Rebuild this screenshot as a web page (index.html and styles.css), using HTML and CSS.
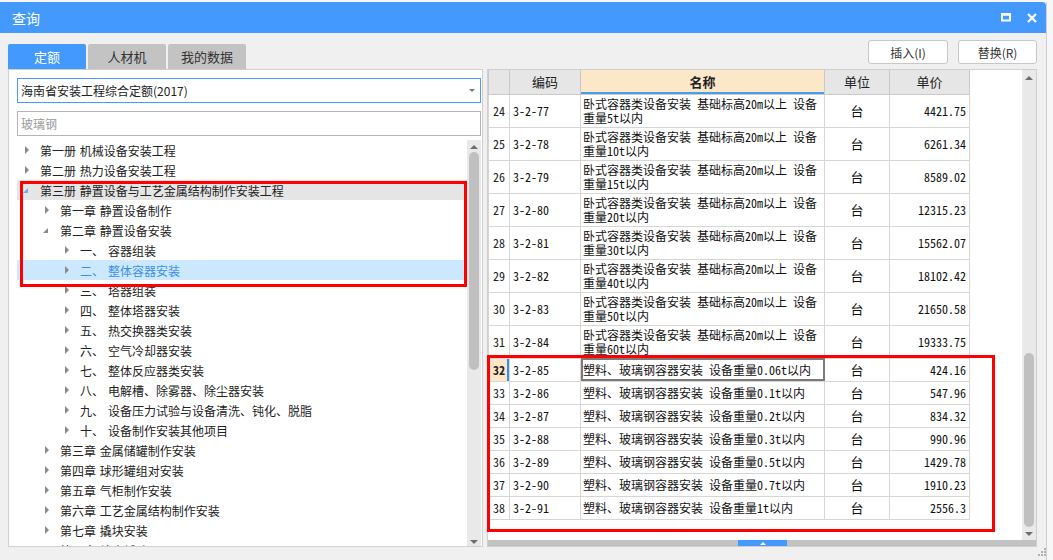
FILE: index.html
```html
<!DOCTYPE html>
<html lang="zh-CN">
<head>
<meta charset="utf-8">
<title>查询</title>
<link rel="stylesheet" href="styles.css">
</head>
<body>
<div class="dialog">
  <div class="titlebar">
    <span class="title">查询</span>
    <div class="win-btns">
      <svg width="10" height="9" viewBox="0 0 10 9"><rect x="1" y="1.5" width="8" height="6" fill="none" stroke="#fff" stroke-width="2"/><rect x="0" y="0" width="10" height="2.5" fill="#fff"/></svg>
      <svg width="10" height="10" viewBox="0 0 10 10"><path d="M1 1L9 9M9 1L1 9" stroke="#fff" stroke-width="2.2"/></svg>
    </div>
  </div>
  <div class="toolbar">
    <div class="tabs">
      <div class="tab active">定额</div>
      <div class="tab">人材机</div>
      <div class="tab">我的数据</div>
    </div>
    <div class="actions">
      <button class="btn btn-insert">插入(I)</button>
      <button class="btn btn-replace">替换(R)</button>
    </div>
  </div>
  <div class="main">
    <div class="left">
      <div class="select">海南省安装工程综合定额(2017)<span class="caret"></span></div>
      <div class="search">玻璃钢</div>
      <div class="tree-wrap">
        <ul class="tree">
          <li class="row l0"><span class="arr"><i class="tri"></i></span><span>第一册 机械设备安装工程</span></li>
          <li class="row l0"><span class="arr"><i class="tri"></i></span><span>第二册 热力设备安装工程</span></li>
          <li class="row l0 hover"><span class="arr"><i class="tri-open blue"></i></span><span>第三册 静置设备与工艺金属结构制作安装工程</span></li>
          <li class="row l1"><span class="arr"><i class="tri"></i></span><span>第一章 静置设备制作</span></li>
          <li class="row l1"><span class="arr"><i class="tri-open"></i></span><span>第二章 静置设备安装</span></li>
          <li class="row l2"><span class="arr"><i class="tri"></i></span><span class="num">一、</span><span>容器组装</span></li>
          <li class="row l2 selected"><span class="arr"><i class="tri"></i></span><span class="num">二、</span><span>整体容器安装</span></li>
          <li class="row l2"><span class="arr"><i class="tri"></i></span><span class="num">三、</span><span>塔器组装</span></li>
          <li class="row l2"><span class="arr"><i class="tri"></i></span><span class="num">四、</span><span>整体塔器安装</span></li>
          <li class="row l2"><span class="arr"><i class="tri"></i></span><span class="num">五、</span><span>热交换器类安装</span></li>
          <li class="row l2"><span class="arr"><i class="tri"></i></span><span class="num">六、</span><span>空气冷却器安装</span></li>
          <li class="row l2"><span class="arr"><i class="tri"></i></span><span class="num">七、</span><span>整体反应器类安装</span></li>
          <li class="row l2"><span class="arr"><i class="tri"></i></span><span class="num">八、</span><span>电解槽、除雾器、除尘器安装</span></li>
          <li class="row l2"><span class="arr"><i class="tri"></i></span><span class="num">九、</span><span>设备压力试验与设备清洗、钝化、脱脂</span></li>
          <li class="row l2"><span class="arr"><i class="tri"></i></span><span class="num">十、</span><span>设备制作安装其他项目</span></li>
          <li class="row l1"><span class="arr"><i class="tri"></i></span><span>第三章 金属储罐制作安装</span></li>
          <li class="row l1"><span class="arr"><i class="tri"></i></span><span>第四章 球形罐组对安装</span></li>
          <li class="row l1"><span class="arr"><i class="tri"></i></span><span>第五章 气柜制作安装</span></li>
          <li class="row l1"><span class="arr"><i class="tri"></i></span><span>第六章 工艺金属结构制作安装</span></li>
          <li class="row l1"><span class="arr"><i class="tri"></i></span><span>第七章 撬块安装</span></li>
          <li class="row l1"><span class="arr"><i class="tri"></i></span><span>第八章 综合辅助项目</span></li>
        </ul>
        <div class="vscroll left-scroll">
          <i class="up"></i>
          <div class="thumb"></div>
          <i class="down"></i>
        </div>
      </div>
    </div>
    <div class="right">
      <div class="grid-wrap">
        <div class="grid">
          <table>
            <colgroup><col class="c-no"><col class="c-code"><col class="c-name"><col class="c-unit"><col class="c-price"></colgroup>
            <thead>
              <tr><th></th><th>编码</th><th class="cur-col">名称</th><th>单位</th><th>单价</th></tr>
            </thead>
            <tbody>
              <tr class="two"><td class="no">24</td><td class="code">3-2-77</td><td class="name">卧式容器类设备安装 基础标高20m以上 设备重量5t以内</td><td class="unit">台</td><td class="price">4421.75</td></tr>
              <tr class="two"><td class="no">25</td><td class="code">3-2-78</td><td class="name">卧式容器类设备安装 基础标高20m以上 设备重量10t以内</td><td class="unit">台</td><td class="price">6261.34</td></tr>
              <tr class="two"><td class="no">26</td><td class="code">3-2-79</td><td class="name">卧式容器类设备安装 基础标高20m以上 设备重量15t以内</td><td class="unit">台</td><td class="price">8589.02</td></tr>
              <tr class="two"><td class="no">27</td><td class="code">3-2-80</td><td class="name">卧式容器类设备安装 基础标高20m以上 设备重量20t以内</td><td class="unit">台</td><td class="price">12315.23</td></tr>
              <tr class="two"><td class="no">28</td><td class="code">3-2-81</td><td class="name">卧式容器类设备安装 基础标高20m以上 设备重量30t以内</td><td class="unit">台</td><td class="price">15562.07</td></tr>
              <tr class="two"><td class="no">29</td><td class="code">3-2-82</td><td class="name">卧式容器类设备安装 基础标高20m以上 设备重量40t以内</td><td class="unit">台</td><td class="price">18102.42</td></tr>
              <tr class="two"><td class="no">30</td><td class="code">3-2-83</td><td class="name">卧式容器类设备安装 基础标高20m以上 设备重量50t以内</td><td class="unit">台</td><td class="price">21650.58</td></tr>
              <tr class="two"><td class="no">31</td><td class="code">3-2-84</td><td class="name">卧式容器类设备安装 基础标高20m以上 设备重量60t以内</td><td class="unit">台</td><td class="price">19333.75</td></tr>
              <tr class="one"><td class="no cur-row">32</td><td class="code">3-2-85</td><td class="name focus">塑料、玻璃钢容器安装 设备重量0.06t以内</td><td class="unit">台</td><td class="price">424.16</td></tr>
              <tr class="one"><td class="no">33</td><td class="code">3-2-86</td><td class="name">塑料、玻璃钢容器安装 设备重量0.1t以内</td><td class="unit">台</td><td class="price">547.96</td></tr>
              <tr class="one"><td class="no">34</td><td class="code">3-2-87</td><td class="name">塑料、玻璃钢容器安装 设备重量0.2t以内</td><td class="unit">台</td><td class="price">834.32</td></tr>
              <tr class="one"><td class="no">35</td><td class="code">3-2-88</td><td class="name">塑料、玻璃钢容器安装 设备重量0.3t以内</td><td class="unit">台</td><td class="price">990.96</td></tr>
              <tr class="one"><td class="no">36</td><td class="code">3-2-89</td><td class="name">塑料、玻璃钢容器安装 设备重量0.5t以内</td><td class="unit">台</td><td class="price">1429.78</td></tr>
              <tr class="one"><td class="no">37</td><td class="code">3-2-90</td><td class="name">塑料、玻璃钢容器安装 设备重量0.7t以内</td><td class="unit">台</td><td class="price">1910.23</td></tr>
              <tr class="one"><td class="no">38</td><td class="code">3-2-91</td><td class="name">塑料、玻璃钢容器安装 设备重量1t以内</td><td class="unit">台</td><td class="price">2556.3</td></tr>
            </tbody>
          </table>
        </div>
        <div class="vscroll right-scroll">
          <i class="up"></i>
          <div class="thumb"></div>
          <i class="down"></i>
        </div>
      </div>
      <div class="hscroll"><span class="hthumb"><i></i></span></div>
    </div>
  </div>
  <svg class="grip" width="8" height="8" viewBox="0 0 8 8"><g fill="#b0b0b0"><rect x="6" y="0" width="2" height="2"/><rect x="3" y="3" width="2" height="2"/><rect x="6" y="3" width="2" height="2"/><rect x="0" y="6" width="2" height="2"/><rect x="3" y="6" width="2" height="2"/><rect x="6" y="6" width="2" height="2"/></g></svg>
  <div class="mark mark1"></div>
  <div class="mark mark2"></div>
</div>
</body>
</html>
```

FILE: styles.css
```css
* { box-sizing: border-box; margin: 0; padding: 0; }
html, body { width: 1053px; height: 560px; overflow: hidden; }
body {
  background: #f7f7f7;
  font-family: "Noto Sans CJK SC", "Microsoft YaHei", sans-serif;
  font-size: 12px;
  color: #222;
}
.dialog {
  position: relative;
  margin-top: 2px;
  width: 1047px;
  height: 558px;
  background: #f0f0f0;
  border-right: 1px solid #cfcfcf;
}
.titlebar {
  height: 31px;
  background: #4499ff;
  color: #fff;
  display: flex;
  align-items: center;
  justify-content: space-between;
  padding: 0 9px 0 12px;
  border-top-right-radius: 4px;
}
.title { font-size: 14px; }
.win-btns { display: flex; align-items: center; gap: 16px; }

.toolbar {
  height: 36px;
  display: flex;
  justify-content: space-between;
  padding: 0 9px 0 8px;
}
.tabs { display: flex; gap: 2px; align-self: flex-end; }
.tab {
  width: 78px;
  height: 25px;
  background: #c3c3c3;
  color: #333;
  font-size: 13px;
  display: flex;
  align-items: center;
  justify-content: center;
  border-radius: 2px 2px 0 0;
}
.tab.active { background: #4499ff; color: #fff; }
.actions { display: flex; gap: 10px; margin-top: 7px; }
.btn {
  height: 24px;
  background: #fff;
  border: 1px solid #c8c8c8;
  border-radius: 3px;
  font-family: inherit;
  font-size: 12px;
  color: #333;
}
.btn-insert { width: 80px; }
.btn-replace { width: 79px; }

.main {
  height: 478px;
  display: flex;
  gap: 4px;
  padding: 0 9px 0 8px;
}
.left {
  width: 475px;
  background: #fff;
  border: 1px solid #cfcfcf;
  padding: 8px 1px 0 8px;
  display: flex;
  flex-direction: column;
}
.select {
  position: relative;
  height: 25px;
  border: 1px solid #4a9cf5;
  padding-left: 3px;
  display: flex;
  align-items: center;
  font-size: 12px;
  color: #222;
}
.caret {
  position: absolute;
  right: 5px;
  top: 10px;
  border-left: 3px solid transparent;
  border-right: 3px solid transparent;
  border-top: 3px solid #777;
}
.search {
  margin-top: 8px;
  height: 25px;
  border: 1px solid #b4b4b4;
  padding-left: 3px;
  display: flex;
  align-items: center;
  color: #999;
}
.tree-wrap {
  margin-top: 4px;
  flex: 1;
  display: flex;
  overflow: hidden;
}
.tree {
  list-style: none;
  flex: 1;
  overflow: hidden;
}
.row {
  height: 20px;
  display: flex;
  align-items: center;
  white-space: nowrap;
  color: #222;
  word-spacing: 1px;
}
.row.l0 { padding-left: 8px; }
.row.l1 { padding-left: 28px; }
.row.l2 { padding-left: 48px; }
.row.hover { background: #e5e5e5; }
.row.selected { background: #cce8ff; color: #3a8ee6; }
.arr { width: 15px; flex: none; display: flex; align-items: center; }
.tri {
  display: block;
  border-left: 4px solid #8a8a8a;
  border-top: 4px solid transparent;
  border-bottom: 4px solid transparent;
}
.tri-open {
  display: block;
  margin-left: -2px;
  border-bottom: 5px solid #8a8a8a;
  border-left: 5px solid transparent;
}
.tri-open.blue { border-bottom-color: #6aaef0; }
.num { width: 28px; flex: none; }

.vscroll {
  width: 14px;
  flex: none;
  background: #e9e9e9;
  position: relative;
}
.vscroll .thumb {
  position: absolute;
  left: 2px;
  width: 10px;
  background: #c0c0c0;
  border-radius: 5px;
}
.vscroll .up, .vscroll .down {
  position: absolute;
  left: 3px;
  border-left: 4px solid transparent;
  border-right: 4px solid transparent;
}
.vscroll .up { border-bottom: 4px solid #6e6e6e; }
.vscroll .down { border-top: 4px solid #6e6e6e; }
.left-scroll .up { top: 5px; }
.left-scroll .thumb { top: 12px; height: 218px; }
.left-scroll .down { bottom: 2px; }
.right-scroll .up { top: 6px; }
.right-scroll .thumb { top: 283px; height: 174px; }
.right-scroll .down { bottom: 4px; }

.right {
  flex: 1;
  background: #fff;
  border: 1px solid #cfcfcf;
  display: flex;
  flex-direction: column;
}
.grid-wrap { flex: 1; display: flex; overflow: hidden; }
.grid { flex: 1; overflow: hidden; }
table {
  border-collapse: collapse;
  table-layout: fixed;
  width: 481px;
  font-family: "Noto Sans Mono CJK SC", "Noto Sans CJK SC", monospace;
  font-size: 12px;
  color: #111;
}
.c-no { width: 21px; }
.c-code { width: 71px; }
.c-name { width: 244px; }
.c-unit { width: 65px; }
.c-price { width: 80px; }
th {
  height: 24px;
  background: #e6e6e6;
  border: 1px solid #c9c9c9;
  border-top: none;
  font-family: "Noto Sans CJK SC", sans-serif;
  font-weight: normal;
  font-size: 13px;
  color: #222;
}
th.cur-col {
  background: #fde7c9;
  font-weight: bold;
  box-shadow: inset 0 -2px 0 #4a9be8;
}
td {
  border: 1px solid #d6d6d6;
  padding: 0 2px;
  vertical-align: middle;
}
tr.two td { height: 33px; }
tr.one td { height: 23px; }
td.no { text-align: center; padding: 0; color: #222; }
td.cur-row { background: #fde6c8; font-weight: bold; box-shadow: inset -2px 0 0 #3b8fea; }
td.code { padding-left: 3px; }
td.name { line-height: 14px; padding-left: 2px; }
tr.two td.name { vertical-align: top; padding-top: 2px; }
td.focus { outline: 2px solid #7a7a7a; outline-offset: -2px; }
td.unit { text-align: center; font-family: "Noto Sans CJK SC", sans-serif; font-size: 13px; }
td.price { text-align: right; padding-right: 3px; }

.hscroll {
  height: 6px;
  background: #c2c2c2;
  position: relative;
}
.hthumb {
  position: absolute;
  left: 250px;
  top: 0;
  width: 49px;
  height: 6px;
  background: #4499ff;
  display: flex;
  justify-content: center;
  align-items: center;
}
.hthumb i {
  border-left: 3px solid transparent;
  border-right: 3px solid transparent;
  border-bottom: 3px solid #fff;
}
.grip { position: absolute; left: 1038px; top: 546px; }
.mark {
  position: absolute;
  border: 3px solid #ff0000;
  pointer-events: none;
}
.mark1 { left: 20px; top: 179px; width: 447px; height: 106px; }
.mark2 { left: 487px; top: 353px; width: 508px; height: 177px; }
```
